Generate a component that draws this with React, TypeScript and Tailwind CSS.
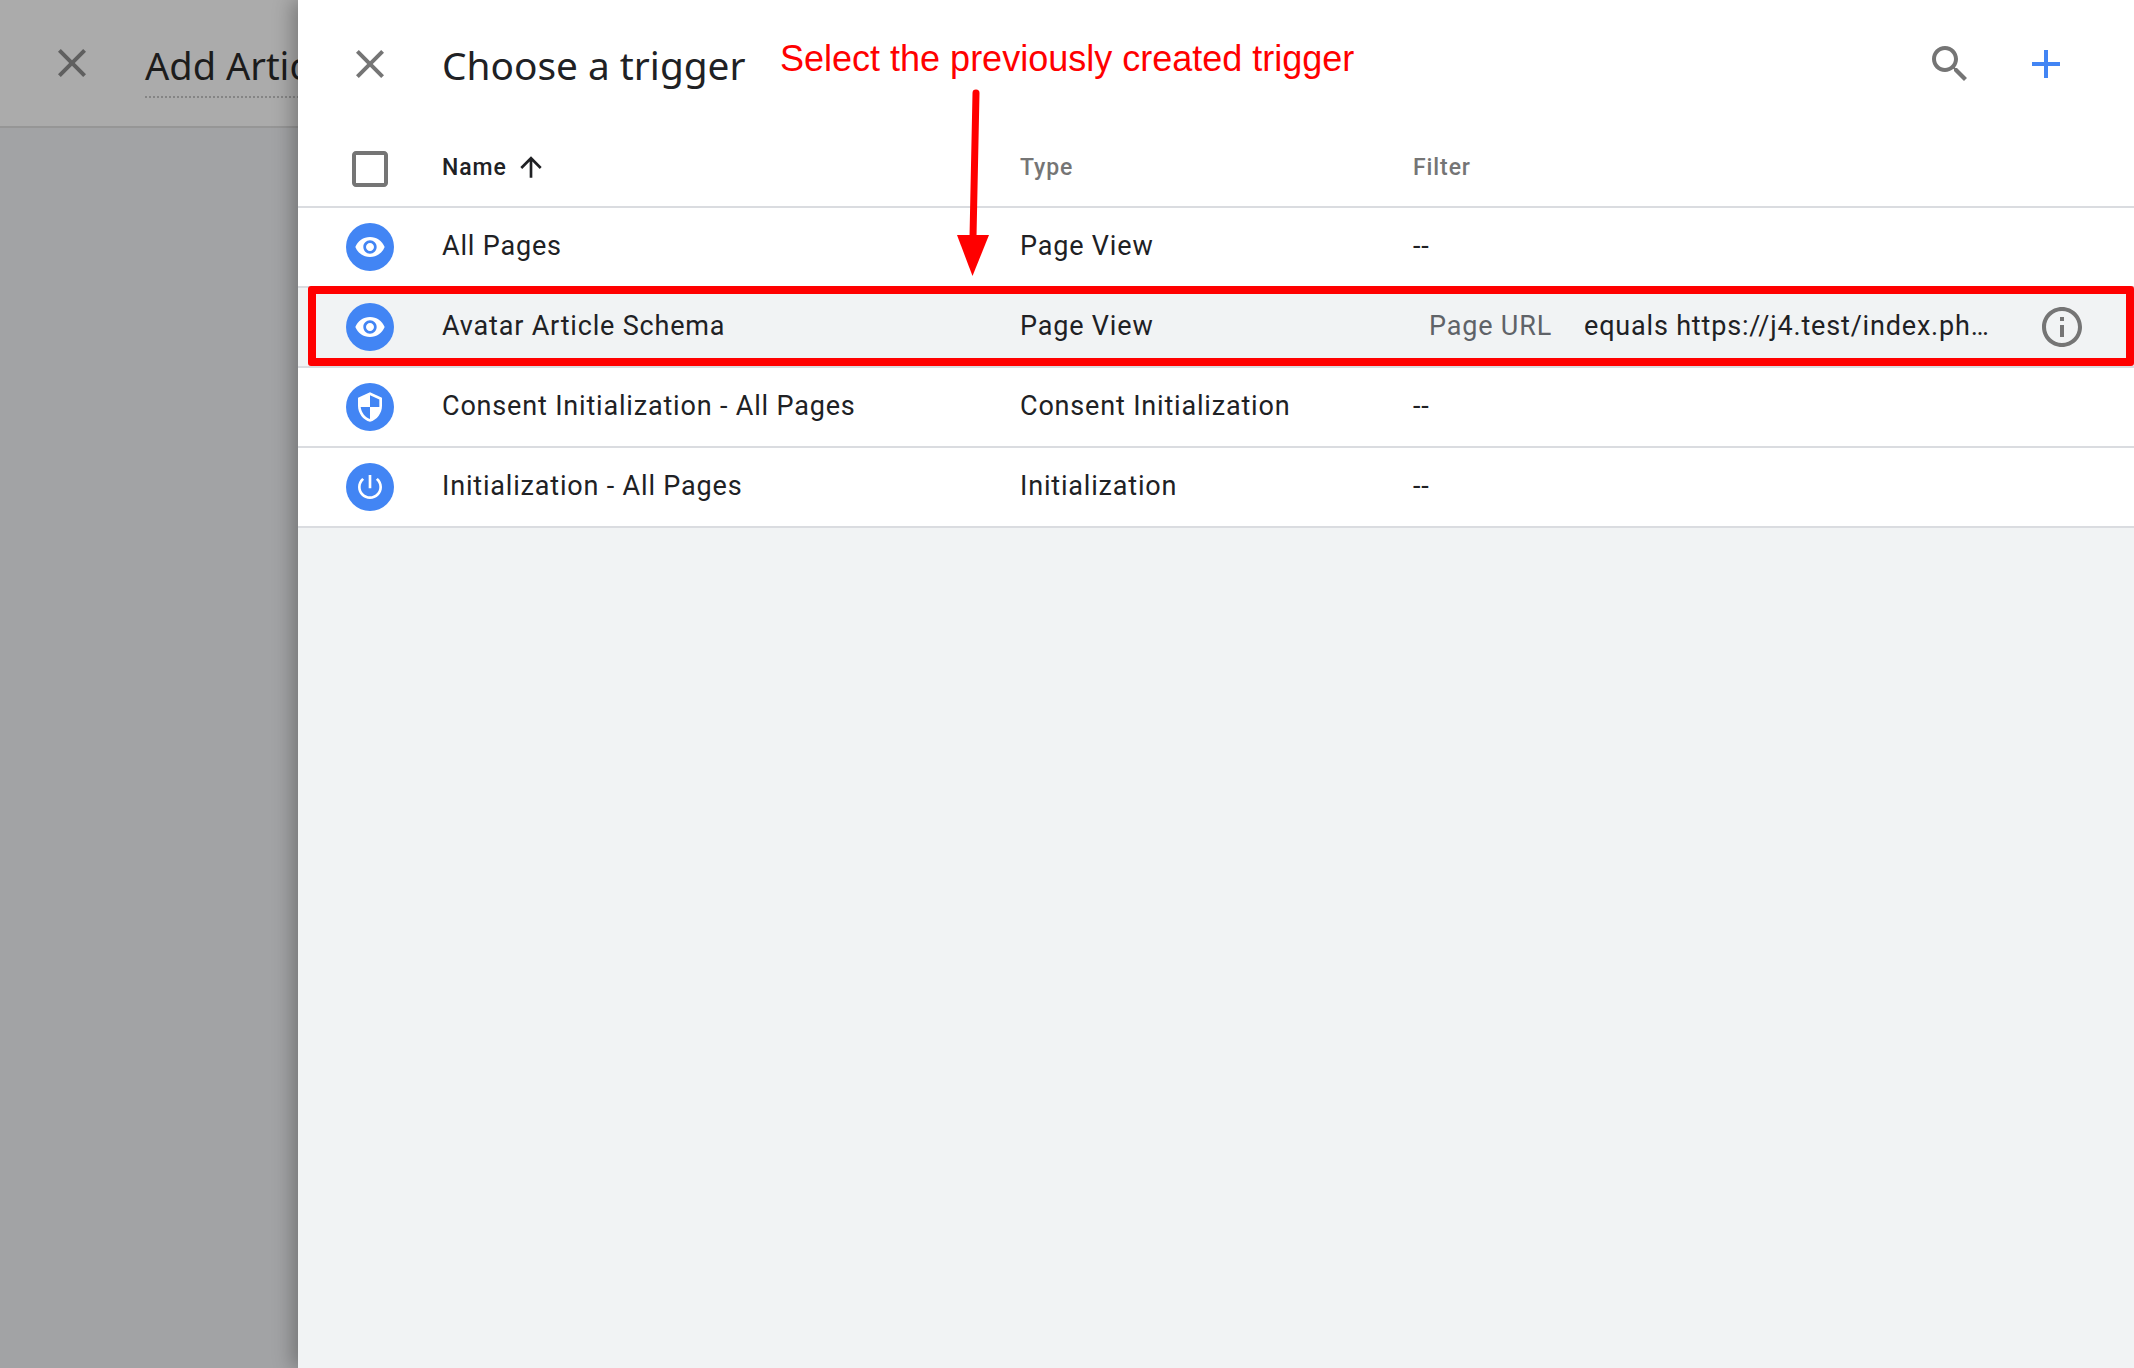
const Ic = ({ d, className }: { d: string; className: string }) => (
  <svg viewBox="0 0 24 24" className={className} fill="currentColor" aria-hidden="true">
    <path d={d} />
  </svg>
);

const CLOSE = "M19 6.41L17.59 5 12 10.59 6.41 5 5 6.41 10.59 12 5 17.59 6.41 19 12 13.41 17.59 19 19 17.59 13.41 12z";
const EYE = "M12 4.5C7 4.5 2.73 7.61 1 12c1.73 4.39 6 7.5 11 7.5s9.27-3.11 11-7.5c-1.73-4.39-6-7.5-11-7.5zM12 17c-2.76 0-5-2.24-5-5s2.24-5 5-5 5 2.24 5 5-2.24 5-5 5zm0-8c-1.66 0-3 1.34-3 3s1.34 3 3 3 3-1.34 3-3-1.34-3-3-3z";
const SHIELD = "M12 1L3 5v6c0 5.55 3.84 10.74 9 12 5.16-1.26 9-6.45 9-12V5l-9-4zm0 10.99h7c-.53 4.12-3.28 7.79-7 8.94V12H5V6.3l7-3.11v8.8z";
const POWER = "M13 3h-2v10h2V3zm4.83 2.17l-1.42 1.42C17.99 7.86 19 9.81 19 12c0 3.87-3.13 7-7 7s-7-3.13-7-7c0-2.19 1.01-4.14 2.58-5.42L6.17 5.17C4.23 6.82 3 9.26 3 12c0 4.97 4.03 9 9 9s9-4.03 9-9c0-2.74-1.23-5.18-3.17-6.83z";
const SEARCH = "M15.5 14h-.79l-.28-.27C15.41 12.59 16 11.11 16 9.5 16 5.91 13.09 3 9.5 3S3 5.91 3 9.5 5.91 16 9.5 16c1.61 0 3.09-.59 4.23-1.57l.27.28v.79l5 4.99L20.49 19l-4.99-5zm-6 0C7.01 14 5 11.99 5 9.5S7.01 5 9.5 5 14 7.01 14 9.5 11.99 14 9.5 14z";
const PLUS = "M19 13h-6v6h-2v-6H5v-2h6V5h2v6h6v2z";
const BOX = "M19 5v14H5V5h14m0-2H5c-1.1 0-2 .9-2 2v14c0 1.1.9 2 2 2h14c1.1 0 2-.9 2-2V5c0-1.1-.9-2-2-2z";
const UP = "M4 12l1.41 1.41L11 7.83V20h2V7.83l5.58 5.59L20 12l-8-8-8 8z";
const INFO = "M11 7h2v2h-2zm0 4h2v6h-2zm1-9C6.48 2 2 6.48 2 12s4.48 10 10 10 10-4.48 10-10S17.52 2 12 2zm0 18c-4.41 0-8-3.59-8-8s3.59-8 8-8 8 3.59 8 8-3.59 8-8 8z";

const rows = [
  { icon: EYE, iconClass: "h-[32px] w-[32px] text-white", name: "All Pages", type: "Page View" },
  { icon: EYE, iconClass: "h-[32px] w-[32px] text-white", name: "Avatar Article Schema", type: "Page View", selected: true },
  { icon: SHIELD, iconClass: "h-[32px] w-[32px] -scale-x-100 text-white", name: "Consent Initialization - All Pages", type: "Consent Initialization" },
  { icon: POWER, iconClass: "h-[32px] w-[32px] text-white", name: "Initialization - All Pages", type: "Initialization" },
];

const GRID = "grid grid-cols-[144px_578px_393px_1fr] items-center";

export default function App() {
  return (
    <div className="relative flex h-[1368px] w-[2134px] overflow-hidden bg-[#a2a3a5] font-['Roboto',sans-serif]">
      <div className="w-[298px] shrink-0 overflow-hidden">
        <div className="flex h-[128px] items-center gap-[49px] whitespace-nowrap border-b-2 border-[#969696] bg-[#ababab] pl-[48px] pt-[10px]">
          <Ic d={CLOSE} className="mt-[-10px] h-[48px] w-[48px] shrink-0 text-[#5f5f5f]" />
          <span className="border-b-2 border-dotted border-[#858585] pb-[5px] font-['Noto_Sans',sans-serif] text-[38px] leading-[52px] text-[#1c1c1c]">
            Add Article
          </span>
        </div>
      </div>

      <div className="flex min-w-0 flex-1 flex-col bg-[#f1f3f4] shadow-[-6px_0_18px_rgba(0,0,0,0.28)]">
        <div className="flex h-[128px] shrink-0 items-center bg-white pl-[48px] pr-[64px]">
          <Ic d={CLOSE} className="h-[48px] w-[48px] text-[#757575]" />
          <h1 className="ml-[48px] pt-[3px] font-['Noto_Sans',sans-serif] text-[38.8px] font-normal text-[#202124]">Choose a trigger</h1>
          <div className="ml-auto flex items-center gap-[48px]">
            <Ic d={SEARCH} className="h-[48px] w-[48px] text-[#757575]" />
            <Ic d={PLUS} className="mt-[-1px] h-[48px] w-[48px] text-[#4285f4]" />
          </div>
        </div>

        <div className={`${GRID} h-[80px] shrink-0 border-b-2 border-[#dadce0] bg-white pt-[3px] text-[23px] font-medium tracking-[0.9px] text-[#757575]`}>
          <div className="flex justify-center">
            <Ic d={BOX} className="h-[48px] w-[48px] text-[#757575]" />
          </div>
          <div className="flex items-center gap-[8px] text-[#202124]">
            Name
            <Ic d={UP} className="mt-[-3px] h-[32px] w-[32px]" />
          </div>
          <div>Type</div>
          <div>Filter</div>
        </div>

        {rows.map((r) => (
          <div
            key={r.name}
            className={`${GRID} h-[80px] shrink-0 border-b-2 border-[#dadce0] text-[27px] tracking-[0.82px] text-[#202124] ${r.selected ? "bg-[#f1f3f4]" : "bg-white"}`}
          >
            <div className="flex justify-center">
              <div className="flex h-[48px] w-[48px] items-center justify-center rounded-full bg-[#4285f4]">
                <Ic d={r.icon} className={r.iconClass} />
              </div>
            </div>
            <div className="pb-[2px]">{r.name}</div>
            <div className="pb-[2px]">{r.type}</div>
            {r.selected ? (
              <div className="flex items-center pl-[16px]">
                <span className="w-[155px] shrink-0 pb-[2px] text-[#5f6368]">Page URL</span>
                <span className="w-[406px] shrink-0 truncate pb-[2px]">equals https://j4.test/index.php/avatar</span>
                <Ic d={INFO} className="ml-[48px] h-[48px] w-[48px] shrink-0 text-[#757575]" />
              </div>
            ) : (
              <div className="pb-[2px]">--</div>
            )}
          </div>
        ))}
      </div>

      {/* Annotations drawn over the screenshot */}
      <div className="absolute left-[308px] top-[286px] h-[80px] w-[1826px] rounded-[3px] border-8 border-[#ff0000]" />
      <div className="absolute left-[780px] top-[37px] whitespace-nowrap font-['Liberation_Sans',sans-serif] text-[36px] leading-[44px] text-[#ff0000]">
        Select the previously created trigger
      </div>
      <svg className="absolute left-[950px] top-[85px] h-[195px] w-[45px]" viewBox="0 0 45 195" aria-hidden="true">
        <path d="M26 8 L23 152" stroke="#ff0000" strokeWidth="7" strokeLinecap="round" fill="none" />
        <path d="M7 150 H39 L22.5 191 Z" fill="#ff0000" />
      </svg>
    </div>
  );
}
